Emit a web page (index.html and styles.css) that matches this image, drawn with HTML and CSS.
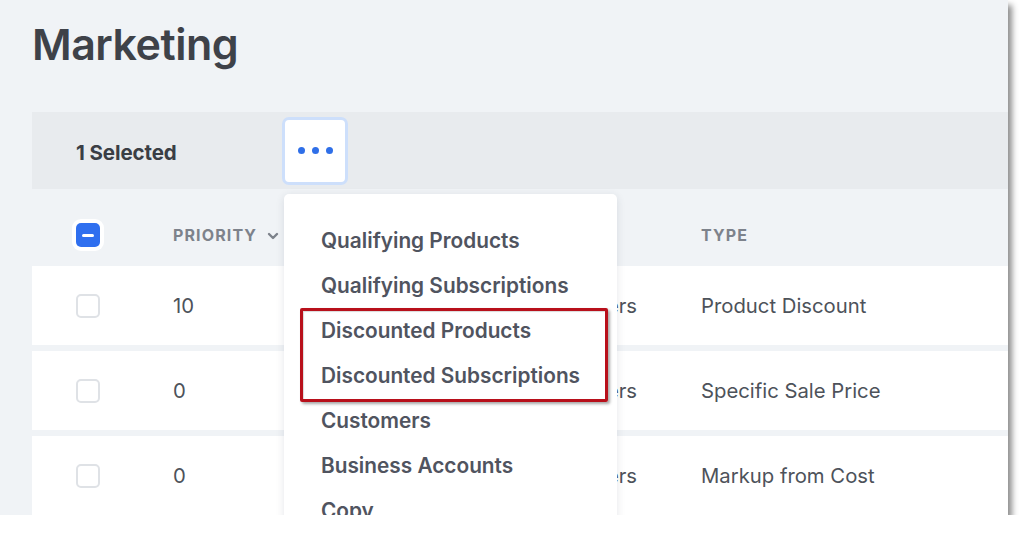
FILE: index.html
```html
<!DOCTYPE html>
<html>
<head>
<meta charset="utf-8">
<link rel="stylesheet" href="styles.css">
</head>
<body>
<div class="frame">
  <h1 class="title">Marketing</h1>
  <div class="selbar">
    <span class="selcount">1 Selected</span>
    <div class="more-wrap">
      <button class="more" aria-label="More actions">
        <span class="dot"></span><span class="dot"></span><span class="dot"></span>
      </button>
      <ul class="menu">
        <li>Qualifying Products</li>
        <li>Qualifying Subscriptions</li>
        <li>Discounted Products</li>
        <li>Discounted Subscriptions</li>
        <li>Customers</li>
        <li>Business Accounts</li>
        <li>Copy</li>
      </ul>
    </div>
  </div>
  <div class="table">
    <div class="row head">
      <div class="c-check"><span class="cb cb-mixed"><span class="minus"></span></span></div>
      <div class="c-prio">PRIORITY
        <svg class="chev" width="12" height="8" viewBox="0 0 12 8"><path d="M2 2 L6 6 L10 2" fill="none" stroke="#7d828b" stroke-width="2.4" stroke-linecap="round" stroke-linejoin="round"/></svg>
      </div>
      <div class="c-name">NAME</div>
      <div class="c-type">TYPE</div>
    </div>
    <div class="row body">
      <div class="c-check"><span class="cb"></span></div>
      <div class="c-prio">10</div>
      <div class="c-name">Customers</div>
      <div class="c-type">Product Discount</div>
    </div>
    <div class="row body">
      <div class="c-check"><span class="cb"></span></div>
      <div class="c-prio">0</div>
      <div class="c-name">Customers</div>
      <div class="c-type">Specific Sale Price</div>
    </div>
    <div class="row body">
      <div class="c-check"><span class="cb"></span></div>
      <div class="c-prio">0</div>
      <div class="c-name">Customers</div>
      <div class="c-type">Markup from Cost</div>
    </div>
  </div>
  <div class="annot"></div>
</div>
</body>
</html>
```

FILE: styles.css
```css
* { box-sizing: border-box; }
html, body { margin: 0; padding: 0; background: #ffffff; }
body { font-family: Inter, "Noto Sans", "Liberation Sans", sans-serif; }

.frame {
  position: relative;
  width: 1008px;
  height: 515px;
  overflow: hidden;
  background: #f0f3f6;
  box-shadow: 4px 5px 6px rgba(0, 0, 0, 0.45);
}

.title {
  margin: 0;
  padding: 17px 0 0 32px;
  font-size: 43px;
  line-height: 54px;
  font-weight: 600;
  color: #3e4249;
  letter-spacing: -0.5px;
}

.selbar {
  margin: 41px 0 0 32px;
  height: 77px;
  width: 1100px;
  background: #e8ebee;
  display: flex;
  align-items: center;
  padding-left: 44px;
}

.selcount {
  width: 206px;
  font-size: 20.5px;
  font-weight: 700;
  color: #3a3e45;
  padding-top: 3px;
  letter-spacing: -0.1px;
}

.more-wrap { position: relative; }

.more {
  width: 66px;
  height: 68px;
  border: 3px solid #cddffb;
  border-radius: 7px;
  background: #ffffff;
  display: flex;
  align-items: center;
  justify-content: center;
  gap: 7px;
  padding: 0;
}

.dot {
  width: 7px;
  height: 7px;
  border-radius: 50%;
  background: #2f6fe8;
}

.menu {
  position: absolute;
  z-index: 5;
  top: 77px;
  left: 2px;
  width: 333px;
  height: 340px;
  margin: 0;
  padding: 24px 0 0 37px;
  list-style: none;
  background: #ffffff;
  border-radius: 5px;
  box-shadow: 0 2px 8px rgba(40, 50, 70, 0.12);
}

.menu li {
  line-height: 45px;
  font-size: 20.8px;
  font-weight: 600;
  color: #50545f;
  white-space: nowrap;
}

.table {
  margin-left: 32px;
  width: 1100px;
  display: flex;
  flex-direction: column;
  gap: 6px;
}

.row {
  display: flex;
  align-items: center;
  padding-left: 44px;
}

.row.head { height: 77px; margin-bottom: -6px; padding-top: 15px; }
.row.body { height: 79px; background: #ffffff; }

.c-check { width: 97px; display: flex; align-items: center; }
.c-prio { width: 360px; display: flex; align-items: center; gap: 10px; }
.c-name { width: 168px; white-space: nowrap; }
.c-type { flex: 1; }

.head .c-prio, .head .c-name, .head .c-type {
  font-size: 16px;
  font-weight: 700;
  letter-spacing: 0.07em;
  color: #7d828b;
}

.body .c-prio, .body .c-name, .body .c-type {
  font-size: 20.3px;
  font-weight: 400;
  color: #4d525a;
}

.chev { margin-top: 1px; }

.cb {
  display: block;
  width: 24px;
  height: 24px;
  border: 2px solid #dfe2e6;
  border-radius: 5px;
  background: #ffffff;
}

.cb-mixed {
  border: none;
  background: #2f6fef;
  box-shadow: 0 0 0 4px #ffffff;
  display: flex;
  align-items: center;
  justify-content: center;
}

.minus {
  width: 12px;
  height: 3px;
  border-radius: 2px;
  background: #ffffff;
}

.annot {
  position: absolute;
  z-index: 6;
  left: 300px;
  top: 308px;
  width: 308px;
  height: 94px;
  border: 3.5px solid #b8101b;
  border-radius: 2px;
  box-shadow: 2px 2px 3px rgba(0, 0, 0, 0.35), inset 1px 1px 1px rgba(0,0,0,0.15);
}
```
